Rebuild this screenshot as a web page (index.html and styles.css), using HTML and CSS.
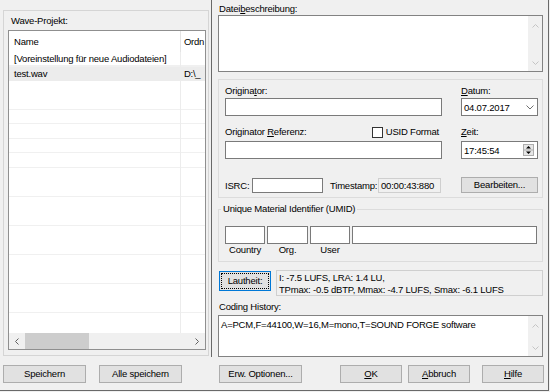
FILE: index.html
```html
<!DOCTYPE html>
<html lang="de">
<head>
    <meta charset="UTF-8">
    <title>Dateieigenschaften</title>
<link rel="stylesheet" href="styles.css">
</head>
<body>
<div class="window">
    <div class="main">
        <div class="left-pane">
            <div class="project-box">
                <div class="caption">Wave-Projekt:</div>
                <div class="list">
                    <div class="list-head">
                        <div class="col-name">Name</div>
                        <div class="col-dir">Ordn</div>
                    </div>
                    <div class="list-body">
                        <div class="row">
                            <div class="col-name">[Voreinstellung für neue Audiodateien]</div>
                            <div class="col-dir"></div>
                        </div>
                        <div class="row selected">
                            <div class="col-name">test.wav</div>
                            <div class="col-dir">D:\_</div>
                        </div>
                    </div>
                    <div class="hscroll">
                        <span class="arrow">
                            <svg width="4" height="7" viewBox="0 0 4 7"><polyline points="3.5,0.5 0.5,3.5 3.5,6.5" fill="none" stroke="#606060"/></svg>
                        </span>
                        <span class="thumb"></span>
                        <span class="track"></span>
                        <span class="arrow">
                            <svg width="4" height="7" viewBox="0 0 4 7"><polyline points="0.5,0.5 3.5,3.5 0.5,6.5" fill="none" stroke="#606060"/></svg>
                        </span>
                    </div>
                </div>
            </div>
        </div>

        <div class="right-pane">
            <div class="label top-label">Datei<u>b</u>eschreibung:</div>
            <div class="memo desc">
                <div class="memo-text"></div>
                <div class="vscroll">
                    <svg width="7" height="4" viewBox="0 0 7 4"><polyline points="0.5,3.5 3.5,0.5 6.5,3.5" fill="none" stroke="#c4c4c4"/></svg>
                    <svg width="7" height="4" viewBox="0 0 7 4"><polyline points="0.5,0.5 3.5,3.5 6.5,0.5" fill="none" stroke="#c4c4c4"/></svg>
                </div>
            </div>

            <div class="group meta">
                <div class="meta-row">
                    <div class="col-main">
                        <div class="label">Origina<u>t</u>or:</div>
                        <div class="field"></div>
                    </div>
                    <div class="col-side">
                        <div class="label"><u>D</u>atum:</div>
                        <div class="field picker">
                            <span>04.07.2017</span>
                            <svg width="8" height="5" viewBox="0 0 8 5"><polyline points="0.5,0.5 4,4 7.5,0.5" fill="none" stroke="#707070"/></svg>
                        </div>
                    </div>
                </div>

                <div class="meta-row row-b">
                    <div class="col-main">
                        <div class="label label-line">
                            <span>Originator <u>R</u>eferenz:</span>
                            <span class="check"><span class="box"></span>USID Format</span>
                        </div>
                        <div class="field"></div>
                    </div>
                    <div class="col-side">
                        <div class="label label-wide"><u>Z</u>eit:</div>
                        <div class="field picker">
                            <span>17:45:54</span>
                            <svg width="11" height="12" viewBox="0 0 11 12">
                                <rect x="0.5" y="0.5" width="10" height="11" fill="#e6e6e6" stroke="#adadad"/>
                                <line x1="0" y1="6" x2="11" y2="6" stroke="#adadad"/>
                                <path d="M3 4.5h5L5.5 2z" fill="#000"/>
                                <path d="M3 7.5h5L5.5 10z" fill="#000"/>
                            </svg>
                        </div>
                    </div>
                </div>

                <div class="meta-row row-c">
                    <div class="col-main isrc">
                        <span class="isrc-label">ISRC:</span>
                        <span class="field small isrc-field"></span>
                        <span class="ts-label">Timestamp:</span>
                        <span class="readonly small ts-field">00:00:43:880</span>
                    </div>
                    <div class="col-side">
                        <button class="btn edit">Bearbeiten...</button>
                    </div>
                </div>
            </div>

            <fieldset class="umid">
                <legend>Unique Material Identifier (UMID)</legend>
                <div class="umid-fields">
                    <div class="umid-cell w40">
                        <div class="field"></div>
                        <div class="umid-caption">Country</div>
                    </div>
                    <div class="umid-cell w41">
                        <div class="field"></div>
                        <div class="umid-caption">Org.</div>
                    </div>
                    <div class="umid-cell w40">
                        <div class="field"></div>
                        <div class="umid-caption">User</div>
                    </div>
                    <div class="umid-cell grow">
                        <div class="field"></div>
                    </div>
                </div>
            </fieldset>

            <div class="loud-row">
                <button class="btn loud">Lautheit:</button>
                <div class="readonly loud-info">I: -7.5 LUFS, LRA: 1.4 LU,<br>TPmax: -0.5 dBTP, Mmax: -4.7 LUFS, Smax: -6.1 LUFS</div>
            </div>

            <div class="label history-label">Coding History:</div>
            <div class="memo history">
                <div class="memo-text">A=PCM,F=44100,W=16,M=mono,T=SOUND FORGE software</div>
                <div class="vscroll">
                    <svg width="7" height="4" viewBox="0 0 7 4"><polyline points="0.5,3.5 3.5,0.5 6.5,3.5" fill="none" stroke="#c4c4c4"/></svg>
                    <svg width="7" height="4" viewBox="0 0 7 4"><polyline points="0.5,0.5 3.5,3.5 6.5,0.5" fill="none" stroke="#c4c4c4"/></svg>
                </div>
            </div>
        </div>
    </div>

    <div class="footer">
        <button class="btn wide">Speichern</button>
        <button class="btn wide save-all">Alle speichern</button>
        <button class="btn wide options">Erw. Optionen...</button>
        <button class="btn narrow ok"><u>O</u>K</button>
        <button class="btn narrow cancel"><u>A</u>bbruch</button>
        <button class="btn narrow help"><u>H</u>ilfe</button>
    </div>
</div>
</body>
</html>
```

FILE: styles.css
```css
body {
    margin: 0;
    background-color: #f0f0f0;
    font-family: "Liberation Sans", Arial, sans-serif;
    font-size: 9.5px;
    letter-spacing: -0.2px;
    color: #000;
}

.window {
    box-sizing: border-box;
    width: 549px;
    height: 391px;
    border-right: 1px solid #696969;
    border-bottom: 1px solid #696969;
    display: flex;
    flex-direction: column;
}

.main {
    display: flex;
    height: 357px;
}

/* left side: project list */

.left-pane {
    box-sizing: border-box;
    width: 212px;
    border-right: 1px solid #696969;
    display: flex;
    flex-direction: column;
}

.project-box {
    flex: 1;
    margin: 10px 2px 1px 3px;
    padding: 3px 2px 5px 4px;
    border: 1px solid #d5d5d5;
    display: flex;
    flex-direction: column;
}

.caption {
    line-height: 13px;
    margin-bottom: 3px;
    padding-left: 3px;
}

.list {
    flex: 1;
    border: 1px solid #8f8f8f;
    background-color: #fff;
    display: flex;
    flex-direction: column;
    overflow: hidden;
}

.list-head {
    display: flex;
    height: 21px;
    line-height: 21px;
}

.col-name {
    box-sizing: border-box;
    width: 172px;
    padding-left: 5px;
    border-right: 1px solid #ececec;
    white-space: nowrap;
    overflow: hidden;
}

.list-head .col-name {
    border-right-color: #e3e3e3;
}

.col-dir {
    flex: 1;
    padding-left: 3px;
    white-space: nowrap;
    letter-spacing: -0.3px;
}

.list-body {
    flex: 1;
    background:
        linear-gradient(to right, transparent 171px, #ececec 171px, #ececec 172px, transparent 172px),
        repeating-linear-gradient(to bottom, transparent 0, transparent 13.5px, #f0f0f0 13.5px, #f0f0f0 14.5px);
}

.row {
    display: flex;
    height: 14.5px;
    line-height: 14px;
}

.row.selected {
    background-color: #ececec;
}

.hscroll {
    display: flex;
    height: 16px;
    background-color: #f0f0f0;
}

.hscroll .arrow {
    width: 16px;
    display: flex;
    align-items: center;
    justify-content: center;
}

.hscroll .thumb {
    width: 64px;
    background-color: #cdcdcd;
}

.hscroll .track {
    flex: 1;
}

/* right side: BWF metadata */

.right-pane {
    box-sizing: border-box;
    width: 336px;
    padding: 3px 5px 0 6px;
    display: flex;
    flex-direction: column;
}

.label {
    line-height: 12px;
    margin-bottom: 1px;
}

.top-label {
    margin-bottom: 0;
    padding-left: 1px;
}

u {
    text-underline-offset: 1px;
}

.memo {
    box-sizing: border-box;
    display: flex;
    border: 1px solid #828282;
    background-color: #fff;
}

.desc {
    height: 57px;
}

.history {
    height: 42px;
}

.memo-text {
    flex: 1;
    padding: 3px 2px;
    line-height: 12px;
}

.vscroll {
    width: 14px;
    padding: 8px 0 6px;
    background-color: #f0f0f0;
    display: flex;
    flex-direction: column;
    justify-content: space-between;
    align-items: center;
}

.group {
    border: 1px solid #dcdcdc;
}

.meta {
    margin-top: 7px;
    padding: 5px 4px 4px 6px;
}

.meta-row {
    display: flex;
    gap: 19px;
}

.col-main {
    width: 217px;
}

.col-side {
    width: 77px;
}

.row-b {
    margin-top: 10px;
}

.row-b .label {
    margin-bottom: 3px;
}

.row-c {
    margin-top: 18px;
}

.label-line {
    display: flex;
    align-items: center;
}

.check {
    margin-left: auto;
    margin-right: 3px;
    display: flex;
    align-items: center;
}

.check .box {
    box-sizing: border-box;
    width: 11px;
    height: 11px;
    margin-right: 3px;
    border: 1px solid #333;
    background-color: #fff;
}

.field {
    box-sizing: border-box;
    height: 18px;
    border: 1px solid #7a7a7a;
    background-color: #fff;
}

.picker {
    display: flex;
    align-items: center;
    justify-content: space-between;
    padding: 0 3px 0 2px;
}

.readonly {
    box-sizing: border-box;
    border: 1px solid #cfcfcf;
    background-color: #f0f0f0;
}

.small {
    height: 15px;
    line-height: 13px;
}

.isrc {
    display: flex;
    align-items: center;
    height: 16px;
}

.isrc-label {
    width: 27px;
}

.isrc-field {
    width: 71px;
}

.ts-label {
    width: 48px;
    margin-left: 7px;
}

.ts-field {
    width: 63px;
    padding-left: 2px;
}

.btn {
    box-sizing: border-box;
    height: 18px;
    padding: 0;
    border: 1px solid #adadad;
    background-color: #e1e1e1;
    font: inherit;
    letter-spacing: inherit;
    color: inherit;
    line-height: 16px;
}

.edit {
    width: 77px;
    height: 16px;
    line-height: 14px;
}

.umid {
    margin: 5px 0 0;
    padding: 11px 5px 5px 6px;
    border: 1px solid #dcdcdc;
    min-inline-size: 0;
}

.umid legend {
    margin-left: -4px;
    padding: 0 2px;
    line-height: 12px;
}

.umid-fields {
    display: flex;
    gap: 2px;
}

.umid-cell.w40 {
    width: 40px;
}

.umid-cell.w41 {
    width: 41px;
}

.umid-cell.grow {
    flex: 1;
}

.umid-caption {
    line-height: 12px;
    text-align: center;
}

.loud-row {
    display: flex;
    height: 26px;
    margin-top: 8px;
}

.loud {
    width: 52px;
    height: 20px;
    margin: 1px 0 0 1px;
    border-color: #0078d7;
    outline: 1px dotted #000;
    outline-offset: -3px;
}

.loud-info {
    flex: 1;
    margin-left: 5px;
    padding: 1px 2px;
    line-height: 11.5px;
}

.history-label {
    margin-top: 5px;
    margin-bottom: 2px;
    padding-left: 1px;
}

/* bottom buttons */

.footer {
    display: flex;
    padding: 8px 0 0 3px;
}

.footer .wide {
    width: 83px;
}

.footer .narrow {
    width: 62px;
}

.save-all {
    margin-left: 13px;
}

.options {
    margin-left: 37px;
}

.ok {
    margin-left: 38px;
}

.cancel {
    margin-left: 6px;
}

.help {
    margin-left: 12px;
}
```
